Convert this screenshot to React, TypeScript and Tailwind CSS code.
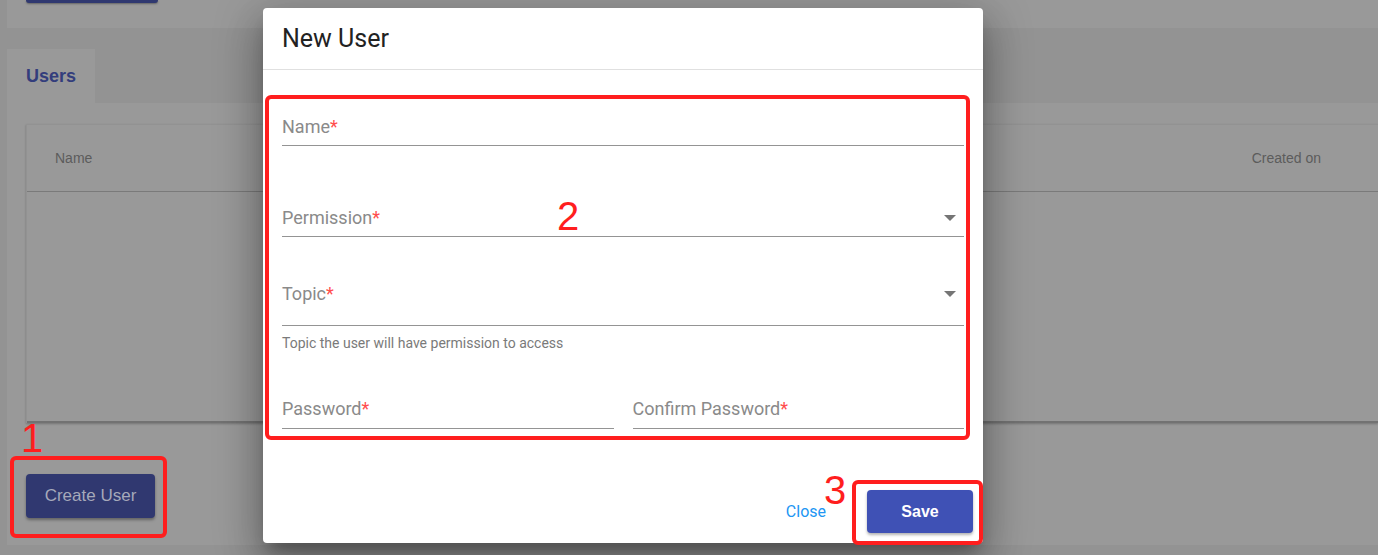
import React from 'react';

const sans = { fontFamily: '"Liberation Sans", Arial, sans-serif' };
const roboto = { fontFamily: 'Roboto, "Liberation Sans", Arial, sans-serif' };

function Caret() {
  return (
    <svg width="12" height="6" viewBox="0 0 12 6" className="block">
      <polygon points="0,0 12,0 6,6" fill="#757575" />
    </svg>
  );
}

function Field({ label, height, pad, select, className = '' }: { label: string; height: string; pad: string; select?: boolean; className?: string }) {
  return (
    <div className={`flex items-start border-b border-[#949494] ${height} ${pad} ${className}`}>
      <span className="text-[18px] leading-[18px] text-[#8a8a8a]">
        {label}
        <span className="text-[#ff4d4d]">*</span>
      </span>
      {select && (
        <span className="ml-auto mr-[8px] mt-[6px]">
          <Caret />
        </span>
      )}
    </div>
  );
}

export default function App() {
  return (
    <div className="relative h-[555px] w-[1378px] overflow-hidden bg-[#939393]" style={sans}>
      {/* dimmed page behind the dialog */}
      <div className="ml-[7px] h-[28px] bg-[#999999]">
        <div className="ml-[19px] h-[3px] w-[132px] rounded-b bg-[#2f3870] shadow-[0_1px_2px_rgba(0,0,0,0.35)]" />
      </div>
      <div className="h-[21px]" />
      <div className="flex">
        <div className="ml-[7px] flex h-[54px] w-[88px] items-center bg-[#999999] pl-[19px]">
          <span className="text-[18px] font-bold text-[#333d7c]">Users</span>
        </div>
      </div>
      <div className="ml-[7px] h-[442px] bg-[#999999] pl-[19px] pt-[21px]">
        <div className="h-[299px] border-l border-t border-[#929292] shadow-[0_1px_2px_rgba(0,0,0,0.25)]">
          <div className="flex h-[67px] items-center border-b border-[#7a7a7a] text-[14px] text-[#5c5c5c]">
            <span className="pl-[28px]">Name</span>
            <span className="ml-auto pr-[57px]">Created on</span>
          </div>
          <div className="h-[231px] border-b-2 border-[#727272]" />
        </div>
        <button className="mt-[51px] h-[44px] w-[129px] rounded bg-[#303870] text-[17px] text-[#a6a9ba] shadow-[0_2px_3px_rgba(0,0,0,0.35)]">
          Create User
        </button>
      </div>

      {/* dialog */}
      <div
        className="absolute left-[263px] top-[8px] flex h-[535px] w-[720px] flex-col rounded bg-white shadow-[0_11px_15px_-7px_rgba(0,0,0,0.3),0_24px_38px_3px_rgba(0,0,0,0.2),0_9px_46px_8px_rgba(0,0,0,0.18)]"
        style={roboto}
      >
        <div className="flex h-[62px] items-center border-b border-[#e0e0e0] px-[19px]">
          <h2 className="text-[25px] font-normal text-[#222222]">New User</h2>
        </div>
        <div className="flex flex-col px-[19px] pt-[35px]">
          <Field label="Name" height="h-[41px]" pad="pt-[13px]" />
          <Field label="Permission" height="h-[41px]" pad="pt-[13px]" select className="mt-[50px]" />
          <Field label="Topic" height="h-[56px]" pad="pt-[15px]" select className="mt-[33px]" />
          <p className="mt-[10px] text-[14px] leading-[14px] text-[#7a7a7a]">Topic the user will have permission to access</p>
          <div className="mt-[38px] flex gap-[19px]">
            <Field label="Password" height="h-[41px]" pad="pt-[12px]" className="flex-1" />
            <Field label="Confirm Password" height="h-[41px]" pad="pt-[12px]" className="flex-1" />
          </div>
        </div>
        <div className="mt-auto flex items-center justify-end pb-[10px] pr-[10px]">
          <button className="mr-[41px] text-[16px] text-[#2196f3]">Close</button>
          <button
            className="h-[43px] w-[106px] rounded bg-[#3f51b5] text-[16px] font-bold text-white shadow-[0_2px_3px_rgba(0,0,0,0.3)]"
            style={sans}
          >
            Save
          </button>
        </div>
      </div>

      {/* annotations */}
      <div className="absolute left-[10px] top-[456px] h-[82px] w-[157px] rounded-md border-4 border-[#ff1e1e]" />
      <div className="absolute left-[265px] top-[95px] h-[345px] w-[705px] rounded-md border-4 border-[#ff1e1e]" />
      <div className="absolute left-[852px] top-[480px] h-[65px] w-[131px] rounded-md border-4 border-[#ff1e1e]" />
      <span className="absolute left-[21px] top-[418px] text-[40px] leading-[40px] text-[#ff1e1e]">1</span>
      <span className="absolute left-[557px] top-[196px] text-[40px] leading-[40px] text-[#ff1e1e]">2</span>
      <span className="absolute left-[824px] top-[470px] text-[40px] leading-[40px] text-[#ff1e1e]">3</span>
    </div>
  );
}
